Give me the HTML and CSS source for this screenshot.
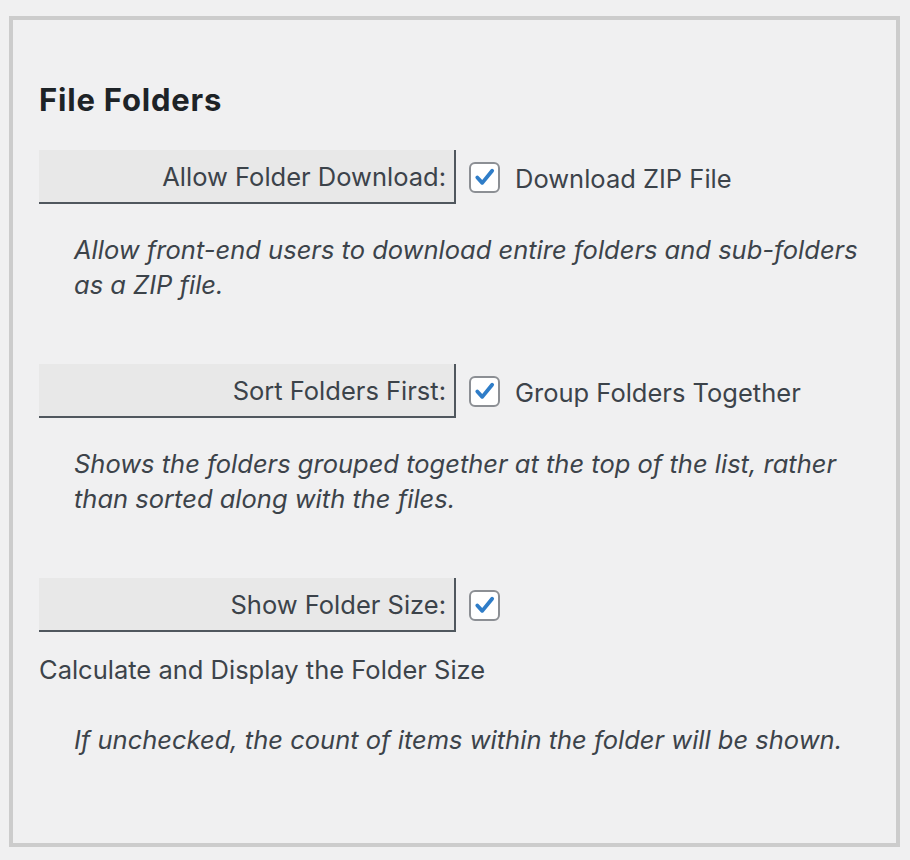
FILE: index.html
```html
<!DOCTYPE html>
<html>
<head>
<meta charset="utf-8">
<link rel="stylesheet" href="styles.css">
</head>
<body>
<div class="panel">
  <h2 class="title">File Folders</h2>

  <div class="setting">
    <div class="row">
      <div class="label">Allow Folder Download:</div>
      <span class="check"><svg viewBox="0 0 30 30" width="30" height="30"><path d="M7 15.5 L12.5 21.5 L23.5 8" fill="none" stroke="#2f7dc8" stroke-width="4.2" stroke-linecap="round" stroke-linejoin="round"/></svg></span>
      <span class="option">Download ZIP File</span>
    </div>
    <p class="desc">Allow front-end users to download entire folders and sub-folders as a ZIP file.</p>
  </div>

  <div class="setting">
    <div class="row">
      <div class="label">Sort Folders First:</div>
      <span class="check"><svg viewBox="0 0 30 30" width="30" height="30"><path d="M7 15.5 L12.5 21.5 L23.5 8" fill="none" stroke="#2f7dc8" stroke-width="4.2" stroke-linecap="round" stroke-linejoin="round"/></svg></span>
      <span class="option">Group Folders Together</span>
    </div>
    <p class="desc">Shows the folders grouped together at the top of the list, rather than sorted along with the files.</p>
  </div>

  <div class="setting">
    <div class="row">
      <div class="label">Show Folder Size:</div>
      <span class="check"><svg viewBox="0 0 30 30" width="30" height="30"><path d="M7 15.5 L12.5 21.5 L23.5 8" fill="none" stroke="#2f7dc8" stroke-width="4.2" stroke-linecap="round" stroke-linejoin="round"/></svg></span>
    </div>
    <div class="option wrapped">Calculate and Display the Folder Size</div>
    <p class="desc">If unchecked, the count of items within the folder will be shown.</p>
  </div>
</div>
</body>
</html>
```

FILE: styles.css
```css
html, body {
  margin: 0;
  padding: 0;
  background: #f0f0f1;
}
body {
  font-family: Inter, "Noto Sans", sans-serif;
  color: #3c434a;
}
.panel {
  box-sizing: border-box;
  width: 891px;
  height: 831px;
  margin: 16px 0 0 9px;
  border: 4px solid #cccccc;
  padding: 0 0 0 26px;
}
.title {
  margin: 62px 0 0 0;
  font-size: 31px;
  font-weight: 700;
  letter-spacing: 0.8px;
  line-height: 36px;
  color: #1d2327;
}
.setting {
  margin-top: 32px;
}
.setting + .setting {
  margin-top: 0;
}
.row {
  display: flex;
  align-items: center;
  height: 54px;
}
.label {
  box-sizing: border-box;
  width: 417px;
  height: 54px;
  background: #e8e8e8;
  border-right: 2px solid #50575e;
  border-bottom: 2px solid #50575e;
  text-align: right;
  padding-right: 8px;
  font-size: 25.5px;
  line-height: 54px;
}
.check {
  box-sizing: border-box;
  width: 31px;
  height: 31px;
  margin-left: 13px;
  border: 2px solid #8c8f94;
  border-radius: 6px;
  background: #fff;
  display: flex;
  align-items: center;
  justify-content: center;
}
.check svg {
  display: block;
}
.option {
  margin-left: 15px;
  font-size: 25.5px;
  line-height: 30px;
  padding-top: 4px;
}
.option.wrapped {
  margin: 23px 0 0 0;
  padding: 0;
  line-height: 30px;
}
.desc {
  margin: 28px 0 0 35px;
  width: 790px;
  font-size: 25.5px;
  font-style: italic;
  line-height: 35px;
  padding-bottom: 62px;
}
.setting:last-child .desc {
  margin-top: 37px;
}
```
